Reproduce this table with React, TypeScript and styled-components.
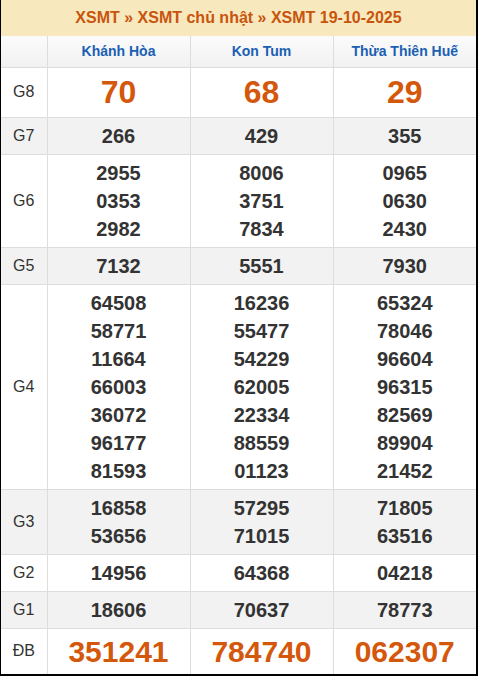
import React from "react";
import styled, { createGlobalStyle } from "styled-components";

const GlobalStyle = createGlobalStyle`
  html, body {
    margin: 0;
    padding: 0;
    background: #ffffff;
  }
  body {
    font-family: "Liberation Sans", Arial, sans-serif;
  }
`;

interface Prize {
  label: string;
  values: string[][];
  kind?: "big" | "special";
}

const provinces = ["Khánh Hòa", "Kon Tum", "Thừa Thiên Huế"];

const prizes: Prize[] = [
  { label: "G8", values: [["70"], ["68"], ["29"]], kind: "big" },
  { label: "G7", values: [["266"], ["429"], ["355"]] },
  {
    label: "G6",
    values: [
      ["2955", "0353", "2982"],
      ["8006", "3751", "7834"],
      ["0965", "0630", "2430"],
    ],
  },
  { label: "G5", values: [["7132"], ["5551"], ["7930"]] },
  {
    label: "G4",
    values: [
      ["64508", "58771", "11664", "66003", "36072", "96177", "81593"],
      ["16236", "55477", "54229", "62005", "22334", "88559", "01123"],
      ["65324", "78046", "96604", "96315", "82569", "89904", "21452"],
    ],
  },
  {
    label: "G3",
    values: [
      ["16858", "53656"],
      ["57295", "71015"],
      ["71805", "63516"],
    ],
  },
  { label: "G2", values: [["14956"], ["64368"], ["04218"]] },
  { label: "G1", values: [["18606"], ["70637"], ["78773"]] },
  { label: "ĐB", values: [["351241"], ["784740"], ["062307"]], kind: "special" },
];

export default function App() {
  return (
    <>
      <GlobalStyle />
      <Wrapper>
        <Title>XSMT » XSMT chủ nhật » XSMT 19-10-2025</Title>
        <Table>
          <colgroup>
            <col style={{ width: 46 }} />
            <col />
            <col />
            <col />
          </colgroup>
          <thead>
            <tr>
              <HeadCell />
              {provinces.map((p) => (
                <HeadCell key={p}>{p}</HeadCell>
              ))}
            </tr>
          </thead>
          <tbody>
            {prizes.map((prize, i) => (
              <Row key={prize.label} $alt={i % 2 === 1}>
                <LabelCell>{prize.label}</LabelCell>
                {prize.values.map((col, j) => (
                  <NumCell key={j} $kind={prize.kind}>
                    {col.map((n) => (
                      <Num key={n}>{n}</Num>
                    ))}
                  </NumCell>
                ))}
              </Row>
            ))}
          </tbody>
        </Table>
      </Wrapper>
    </>
  );
}

const Wrapper = styled.div`
  width: 475px;
  border-left: 1px solid #000;
  border-right: 2px solid #000;
  border-bottom: 2px solid #000;
  background: #fff;
`;

const Title = styled.div`
  height: 36px;
  line-height: 35px;
  background: #f8e8bd;
  color: #c8540e;
  font-size: 16px;
  font-weight: bold;
  text-align: center;
  box-sizing: border-box;
`;

const Table = styled.table`
  width: 100%;
  border-collapse: collapse;
  table-layout: fixed;
`;

const HeadCell = styled.th`
  height: 31px;
  padding: 0;
  background: linear-gradient(#fbfbfb, #f1f1f1);
  color: #1a5fb4;
  font-size: 14px;
  font-weight: bold;
  text-align: center;
  border-left: 1px solid #dddddd;
  box-sizing: border-box;
  &:first-child {
    border-left: none;
  }
`;

const Row = styled.tr<{ $alt: boolean }>`
  background: ${(p) => (p.$alt ? "#f2f2f2" : "#ffffff")};
  & > td {
    border-top: 1px solid #dddddd;
  }
`;

const LabelCell = styled.td`
  padding: 0;
  font-size: 16px;
  color: #333;
  text-align: center;
  vertical-align: middle;
`;

const NumCell = styled.td<{ $kind?: "big" | "special" }>`
  padding: 4px 0 4px;
  border-left: 1px solid #dddddd;
  text-align: center;
  vertical-align: middle;
  font-weight: bold;
  color: ${(p) => (p.$kind ? "#d4580b" : "#333")};
  font-size: ${(p) =>
    p.$kind === "big" ? "32px" : p.$kind === "special" ? "30px" : "20px"};
  line-height: ${(p) =>
    p.$kind === "big" ? "41px" : p.$kind === "special" ? "37px" : "28px"};
`;

const Num = styled.div``;
